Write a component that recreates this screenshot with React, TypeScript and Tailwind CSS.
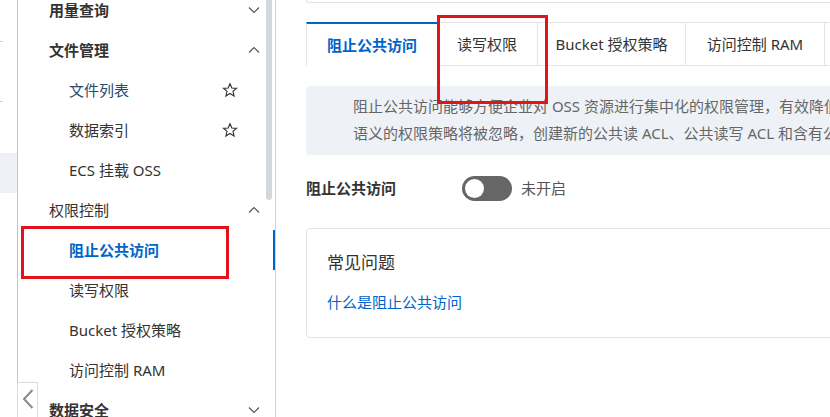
const font = { fontFamily: '"Noto Sans", "Noto Sans CJK SC", sans-serif' };

function Chevron({ up }: { up?: boolean }) {
  return (
    <svg width="12" height="8" viewBox="0 0 12 8" className="ml-auto mr-[4px]">
      <polyline
        points={up ? '1,6.5 6,1.5 11,6.5' : '1,1.5 6,6.5 11,1.5'}
        fill="none"
        stroke="#555"
        strokeWidth="1.2"
      />
    </svg>
  );
}

function StarIcon() {
  return (
    <svg width="16" height="16" viewBox="0 0 24 24" className="ml-auto mr-[26px]">
      <polygon
        points="12,2.5 14.8,9 21.8,9.5 16.5,14 18.1,21 12,17.3 5.9,21 7.5,14 2.2,9.5 9.2,9"
        fill="none"
        stroke="#333"
        strokeWidth="1.7"
        strokeLinejoin="miter"
      />
    </svg>
  );
}

type Item = { label: string; kind: 'head' | 'sub'; open?: boolean; bold?: boolean; star?: boolean; active?: boolean; color?: string };

const items: Item[] = [
  { label: '用量查询', kind: 'head', bold: true },
  { label: '文件管理', kind: 'head', bold: true, open: true },
  { label: '文件列表', kind: 'sub', star: true, color: 'text-[#2b4a70]' },
  { label: '数据索引', kind: 'sub', star: true },
  { label: 'ECS 挂载 OSS', kind: 'sub' },
  { label: '权限控制', kind: 'head', open: true },
  { label: '阻止公共访问', kind: 'sub', active: true },
  { label: '读写权限', kind: 'sub' },
  { label: 'Bucket 授权策略', kind: 'sub' },
  { label: '访问控制 RAM', kind: 'sub' },
  { label: '数据安全', kind: 'head', bold: true },
];

const tabs = [
  { label: '读写权限', w: 'w-[101px]' },
  { label: 'Bucket 授权策略', w: 'w-[148px]' },
  { label: '访问控制 RAM', w: 'w-[139px]' },
  { label: '跨域设置', w: 'w-[110px]' },
];

export default function App() {
  return (
    <div className="relative flex h-[417px] w-[830px] overflow-hidden bg-white text-[15px] text-[#333]" style={font}>
      {/* left strip */}
      <div className="flex w-[17px] shrink-0 flex-col">
        <div className="h-[41px]"></div>
        <div className="h-[1px] w-[3px] bg-[#d0d0d0]"></div>
        <div className="h-[59px]"></div>
        <div className="h-[1px] w-[3px] bg-[#d0d0d0]"></div>
        <div className="h-[51px]"></div>
        <div className="h-[40px] bg-[#eef1f6]"></div>
      </div>

      {/* sidebar */}
      <div className="relative w-[259px] shrink-0 border-l border-r border-l-[#c4c4c4] border-r-[#d2d2d2]">
        <div className="-mt-[10px] w-[246px]">
          {items.map((it) => (
            <div
              key={it.label}
              className={`flex h-[40px] items-center ${it.kind === 'head' ? 'pl-[31px]' : 'pl-[51px]'}`}
            >
              <span
                className={`${it.bold || it.active ? 'font-bold' : ''} ${
                  it.active ? 'text-[#0064c8]' : it.color ?? 'text-[#333]'
                }`}
              >
                {it.label}
              </span>
              {it.kind === 'head' && <Chevron up={it.open} />}
              {it.star && <StarIcon />}
            </div>
          ))}
        </div>
        {/* scrollbar thumb */}
        <div className="absolute right-[3px] top-0 h-[200px] w-[6px] rounded-b-[3px] bg-[#d3d7de]"></div>
        {/* active indicator */}
        <div className="absolute right-0 top-[230px] h-[40px] w-[2px] bg-[#0064c8]"></div>
        {/* collapse button */}
        <div className="absolute left-[-1px] top-[382px] flex h-[40px] w-[21px] items-start justify-center border border-[#dcdcdc] bg-white pt-[6px]">
          <svg width="12" height="20" viewBox="0 0 12 20">
            <polyline points="10.5,1 2,10 10.5,19" fill="none" stroke="#8a8a8a" strokeWidth="2" />
          </svg>
        </div>
      </div>

      {/* main */}
      <div className="w-[900px] shrink-0 pl-[30px]">
        <div className="h-[3px] rounded-b-[4px] border-x border-b border-[#e3e3e3]"></div>

        {/* tabs */}
        <div className="mt-[19px] flex">
          <div className="flex h-[44px] w-[131px] items-center justify-center border-l border-t-2 border-l-[#e5e5e5] border-t-[#0064c8] font-bold text-[#0064c8]">
            阻止公共访问
          </div>
          {tabs.map((t) => (
            <div
              key={t.label}
              className={`flex h-[44px] ${t.w} items-center justify-center border-y border-r border-[#e5e5e5] bg-white text-[#333]`}
            >
              {t.label}
            </div>
          ))}
          <div className="h-[44px] flex-1 border-b border-[#e5e5e5]"></div>
        </div>

        {/* notice */}
        <div className="mt-[20px] h-[69px] rounded-[4px] bg-[#eef2f7] pl-[47px] pt-[7px] leading-[27px] text-[#666]">
          <div className="whitespace-nowrap">
            阻止公共访问能够方便企业对 OSS 资源进行集中化的权限管理，有效降低数据泄露风险。开启后，已有的公共访问权限和公共访问
          </div>
          <div className="whitespace-nowrap">
            语义的权限策略将被忽略，创建新的公共读 ACL、公共读写 ACL 和含有公共访问语义的权限策略将被禁止。
          </div>
        </div>

        {/* toggle row */}
        <div className="mt-[21px] flex h-[25px] items-center">
          <span className="w-[156px] font-bold text-[#333]">阻止公共访问</span>
          <div className="flex h-[25px] w-[50px] items-center rounded-full bg-[#666] pl-[3px]">
            <div className="h-[19px] w-[19px] rounded-full bg-white"></div>
          </div>
          <span className="ml-[9px] text-[#555]">未开启</span>
        </div>

        {/* faq */}
        <div className="mt-[27px] h-[110px] rounded-[4px] border border-[#e3e3e3] px-[20px] pt-[22px]">
          <div className="text-[17px] leading-[24px] text-[#333]">常见问题</div>
          <div className="mt-[16px] leading-[22px] text-[#0064c8]">什么是阻止公共访问</div>
        </div>
      </div>

      {/* annotation boxes */}
      <div className="pointer-events-none absolute left-[21px] top-[226px] h-[53px] w-[208px] border-[3px] border-[#e3131c]"></div>
      <div className="pointer-events-none absolute left-[437px] top-[15px] h-[89px] w-[111px] border-[3px] border-[#e3131c]"></div>
    </div>
  );
}
